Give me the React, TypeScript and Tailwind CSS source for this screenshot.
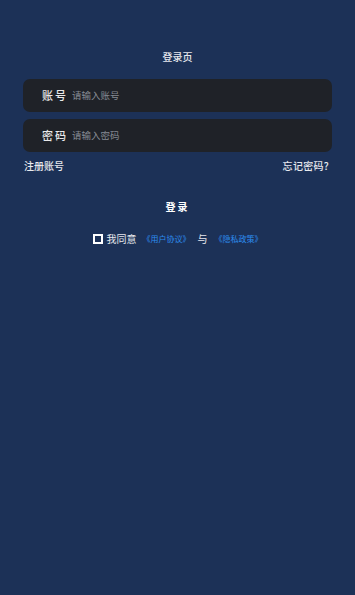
import { useState } from "react";

export default function App() {
  const [account, setAccount] = useState("");
  const [password, setPassword] = useState("");
  const [agreed, setAgreed] = useState(false);

  return (
    <div
      className="min-h-[595px] w-full bg-[#1c3157] px-[23px] pt-[50px] text-white"
      style={{ fontFamily: '"Noto Sans CJK SC", "Noto Sans", sans-serif' }}
    >
      {/* Title */}
      <h1 className="text-center text-[10px] leading-[14px] font-medium text-white/90">登录页</h1>

      {/* Fields */}
      <div className="mt-[15px] flex flex-col gap-[7px]">
        <label className="flex h-[33px] items-center rounded-[7px] bg-[#1f2228] pl-[19px] pr-3">
          <span className="w-[30px] text-[11px] font-medium tracking-[2px] text-white/90">账号</span>
          <input
            value={account}
            onChange={(e) => setAccount(e.target.value)}
            placeholder="请输入账号"
            className="flex-1 bg-transparent text-[9.5px] text-white outline-none placeholder:text-[#858a93]"
          />
        </label>
        <label className="flex h-[33px] items-center rounded-[7px] bg-[#1f2228] pl-[19px] pr-3">
          <span className="w-[30px] text-[11px] font-medium tracking-[2px] text-white/90">密码</span>
          <input
            type="password"
            value={password}
            onChange={(e) => setPassword(e.target.value)}
            placeholder="请输入密码"
            className="flex-1 bg-transparent text-[9.5px] text-white outline-none placeholder:text-[#858a93]"
          />
        </label>
      </div>

      {/* Links */}
      <div className="mt-[7px] flex items-center justify-between px-[1px] text-[10px] leading-[14px] font-medium text-white/90">
        <span>注册账号</span>
        <span className="pr-[2px] tracking-[0.3px]">忘记密码?</span>
      </div>

      {/* Login */}
      <button className="mt-[27px] block w-full text-center text-[10px] leading-[14px] font-bold tracking-[2px] text-white">
        登录
      </button>

      {/* Agreement */}
      <div className="mt-[18px] flex items-center justify-center gap-[2px] text-[10px] leading-[14px]">
        <button
          onClick={() => setAgreed(!agreed)}
          className="mr-[2px] flex h-[10px] w-[10px] items-center justify-center border-2 border-white bg-transparent"
        >
          {agreed && <span className="h-[2px] w-[2px] bg-white" />}
        </button>
        <span className="text-white/90">我同意</span>
        <span className="ml-[4px] text-[8px] text-[#2c8df0]">《用户协议》</span>
        <span className="mx-[5px] text-white/90">与</span>
        <span className="text-[8px] text-[#2c8df0]">《隐私政策》</span>
      </div>
    </div>
  );
}
